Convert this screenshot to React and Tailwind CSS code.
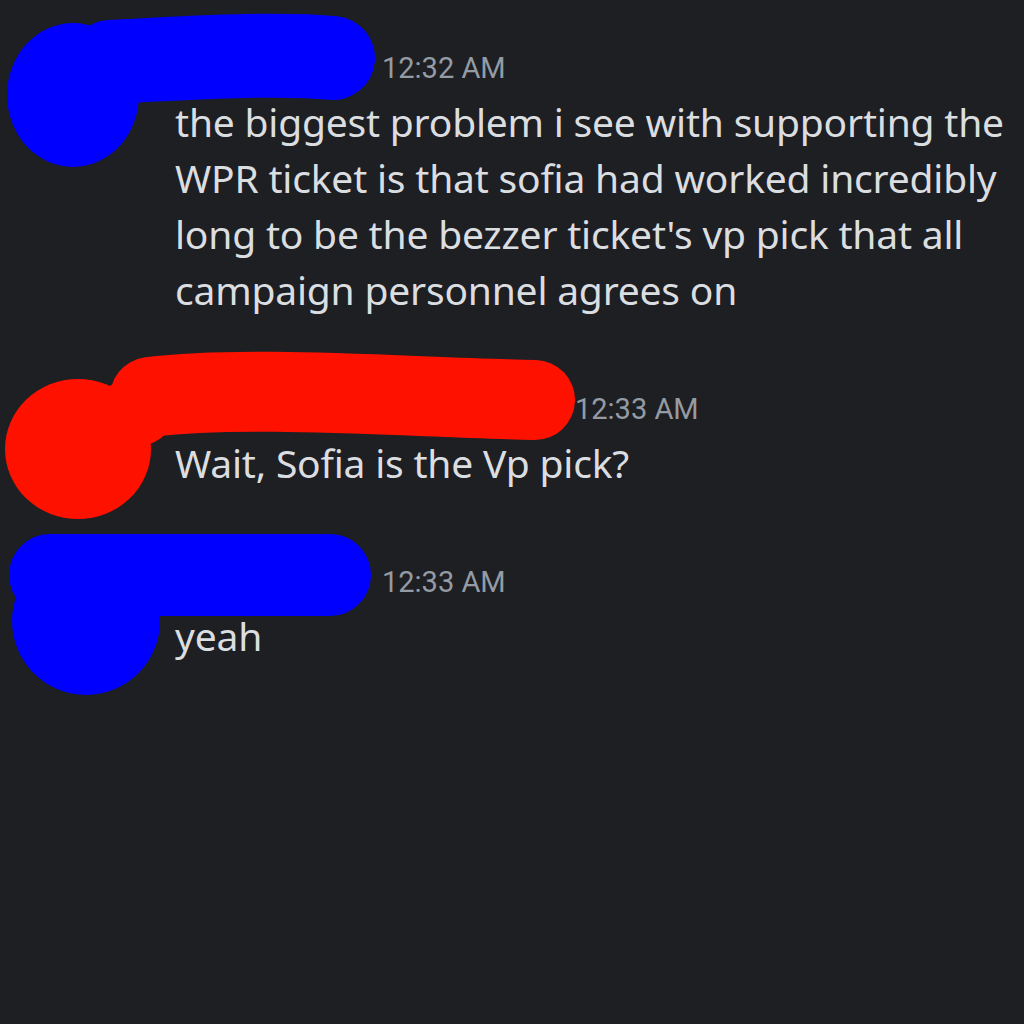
import React from 'react';

const BLUE = '#0000ff';
const RED = '#ff1100';

function Scribble({ kind }) {
    // marker scribbles drawn over avatar + username, coords relative to the message group
    if (kind === 'blue1') {
        return (
            <svg className="absolute left-0 top-0 overflow-visible" width="600" height="200">
                <path d="M 110 12 C 200 7, 280 3, 333 8" stroke={BLUE} strokeWidth="84" strokeLinecap="round" fill="none" />
                <ellipse cx="73" cy="45" rx="66" ry="72" fill={BLUE} />
            </svg>
        );
    }
    if (kind === 'red') {
        return (
            <svg className="absolute left-0 top-0 overflow-visible" width="700" height="200">
                <path d="M 150 6 C 250 -6, 400 6, 535 9" stroke={RED} strokeWidth="80" strokeLinecap="round" fill="none" />
                <path d="M 95 41 L 140 19" stroke={RED} strokeWidth="70" strokeLinecap="round" fill="none" />
                <ellipse cx="78" cy="58" rx="73" ry="70" fill={RED} />
            </svg>
        );
    }
    return (
        <svg className="absolute left-0 top-0 overflow-visible" width="600" height="200">
            <path d="M 50 11 L 330 11" stroke={BLUE} strokeWidth="82" strokeLinecap="round" fill="none" />
            <circle cx="86" cy="57" r="74" fill={BLUE} />
        </svg>
    );
}

const messages = [
    {
        time: '12:32 AM',
        nameWidth: 'w-[197px]',
        scribble: 'blue1',
        lines: [
            'the biggest problem i see with supporting the',
            'WPR ticket is that sofia had worked incredibly',
            "long to be the bezzer ticket's vp pick that all",
            'campaign personnel agrees on',
        ],
    },
    {
        time: '12:33 AM',
        nameWidth: 'w-[390px]',
        scribble: 'red',
        lines: ['Wait, Sofia is the Vp pick?'],
    },
    {
        time: '12:33 AM',
        nameWidth: 'w-[197px]',
        scribble: 'blue3',
        lines: ['yeah'],
    },
];

export default function App() {
    return (
        <div className="w-[1024px] h-[1024px] bg-[#1e1f22] overflow-hidden pt-[50px]">
            <div className="flex flex-col gap-[73px]">
                {messages.map((m, i) => (
                    <div key={i} className="relative pl-[175px]">
                        {/* header: name (scribbled out) + time */}
                        <div className="flex items-baseline h-[36px]">
                            <span className={`${m.nameWidth} shrink-0 mr-[10px]`} />
                            <span className="text-[29px] leading-[36px] text-[#949ba4] font-['Roboto',sans-serif]">
                                {m.time}
                            </span>
                        </div>
                        <div className="mt-[8px] text-[39px] leading-[56px] tracking-[-0.2px] text-[#dbdee1] font-['Noto_Sans',sans-serif]">
                            {m.lines.map((l, j) => (
                                <div key={j} className="whitespace-nowrap">{l}</div>
                            ))}
                        </div>
                        <Scribble kind={m.scribble} />
                    </div>
                ))}
            </div>
        </div>
    );
}
